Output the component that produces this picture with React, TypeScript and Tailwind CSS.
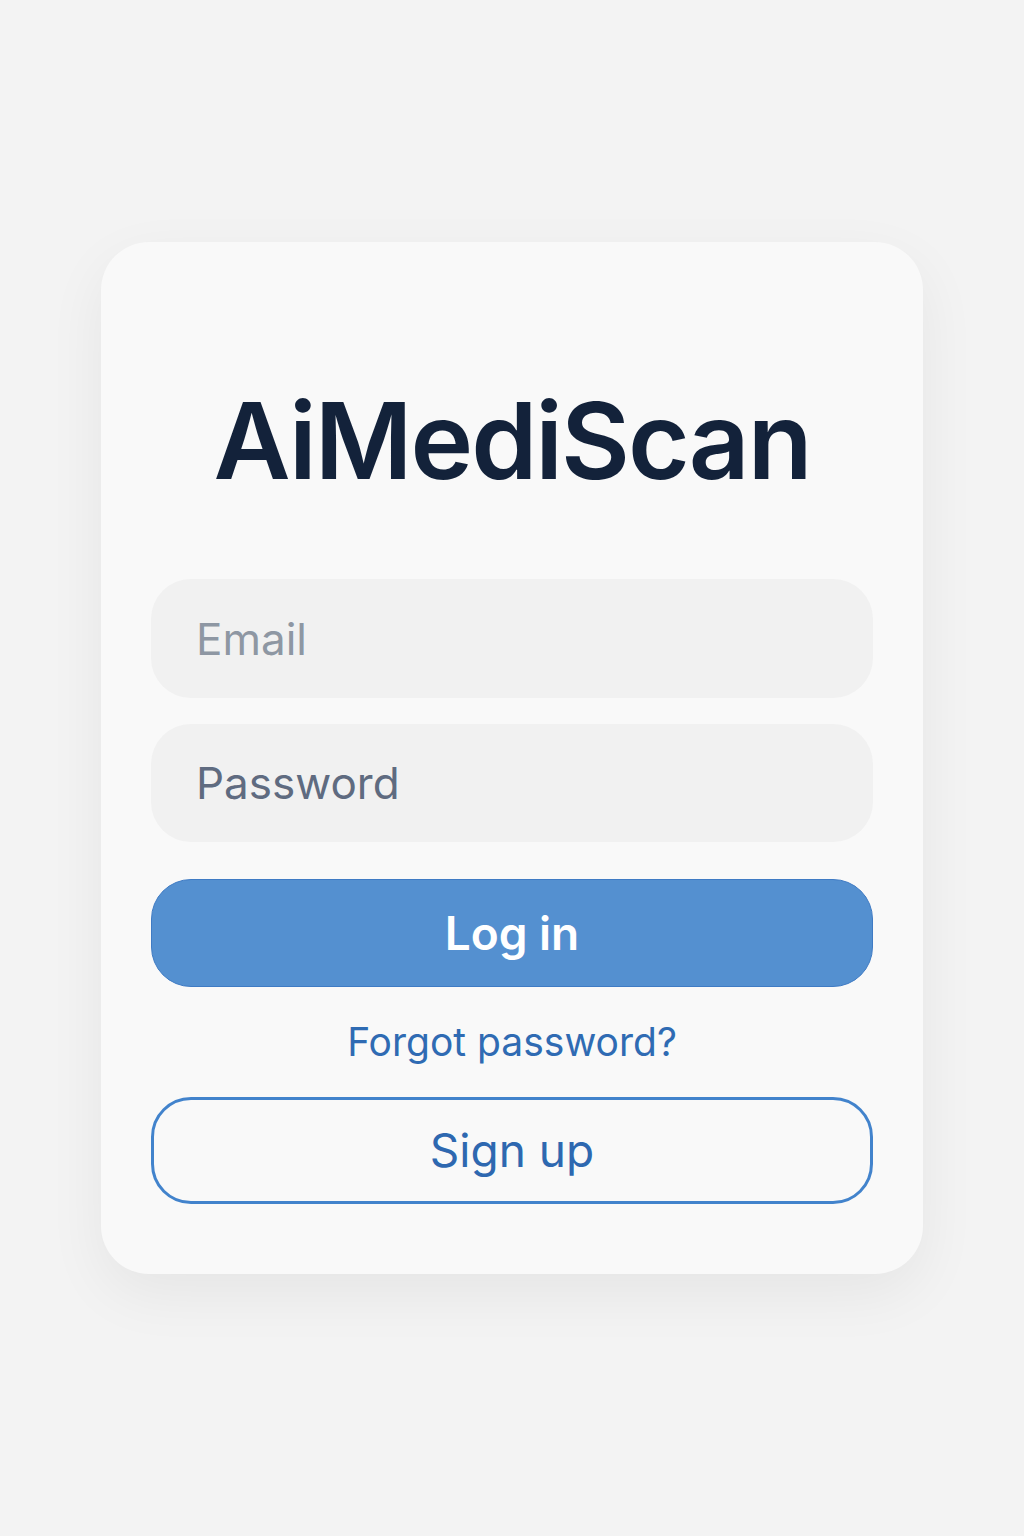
export default function App() {
  return (
    <div className="min-h-[1536px] w-full bg-[#f3f3f3] flex justify-center pt-[242px]" style={{ fontFamily: "Inter, 'Noto Sans', sans-serif" }}>
      <div className="w-[822px] h-[1032px] bg-[#f9f9f9] rounded-[48px] shadow-[0_20px_60px_rgba(0,0,0,0.06)] px-[50px] pt-[146px] flex flex-col">
        <h1 className="text-center text-[106px] leading-none font-semibold tracking-[-2px] text-[#13223a]">AiMediScan</h1>

        <input
          type="email"
          placeholder="Email"
          className="mt-[85px] h-[119px] w-full rounded-[40px] bg-[#f1f1f1] px-[45px] text-[44px] text-[#5f6b80] placeholder:text-[#8e97a3] outline-none"
        />
        <input
          type="password"
          placeholder="Password"
          className="mt-[26px] h-[118px] w-full rounded-[40px] bg-[#f1f1f1] px-[45px] text-[44px] text-[#5f6b80] placeholder:text-[#5f6b80] outline-none"
        />

        <button className="mt-[37px] h-[108px] w-full rounded-[40px] bg-[#5490d0] border border-[#3f7bc4] text-white text-[46px] font-semibold">
          Log in
        </button>

        <a href="#" className="mt-[30px] self-center text-[39px] leading-[50px] text-[#2f6bb3] no-underline">
          Forgot password?
        </a>

        <button className="mt-[30px] h-[107px] w-full rounded-[40px] border-[3px] border-[#4283cc] bg-transparent text-[46px] text-[#2e68b0]">
          Sign up
        </button>
      </div>
    </div>
  );
}
